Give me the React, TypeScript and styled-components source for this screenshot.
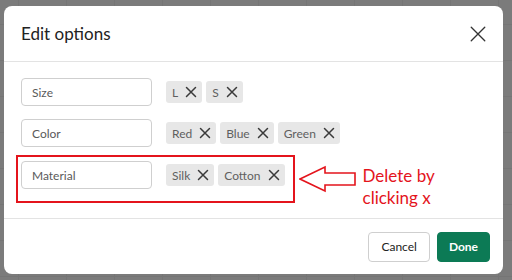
import styled, { createGlobalStyle } from "styled-components";

const GlobalStyle = createGlobalStyle`
   html, body {
      margin: 0;
      padding: 0;
   }
   body {
      font-family: Lato, "Noto Sans", "Liberation Sans", sans-serif;
      background: #7b7b7b;
   }
   * {
      box-sizing: border-box;
   }
`

const Backdrop = styled.div`
   width: 512px;
   height: 280px;
   overflow: hidden;
   background-color: #7b7b7b;
   background-image:
      linear-gradient(#757575 1px, transparent 1px),
      linear-gradient(90deg, #757575 1px, transparent 1px);
   background-size: 100% 36px, 48px 100%;
   background-position: 0 24px, 18px 0;
   padding: 6px 9px 6px 4px;
`

const Modal = styled.div`
   width: 499px;
   height: 268px;
   background: #ffffff;
   border-radius: 8px;
   display: flex;
   flex-direction: column;
`

const Header = styled.div`
   height: 56px;
   display: flex;
   align-items: center;
   justify-content: space-between;
   padding: 0 16px 0 17px;
   border-bottom: 1px solid #e3e3e3;
`

const Title = styled.h2`
   margin: 0;
   font-size: 17px;
   font-weight: 400;
   color: #222;
`

const IconButton = styled.button`
   background: transparent;
   border: 0;
   padding: 0;
   width: 18px;
   height: 18px;
   display: flex;
   align-items: center;
   justify-content: center;
   color: #333;
   cursor: pointer;
`

const Body = styled.div`
   flex: 1;
   display: flex;
   flex-direction: column;
   gap: 13px;
   padding: 16px 17px 0 17px;
   border-bottom: 1px solid #e3e3e3;
`

const Row = styled.div<{ highlighted?: boolean }>`
   position: relative;
   height: 28px;
   display: flex;
   align-items: center;
   margin-top: ${({ highlighted }) => (highlighted ? "1px" : "0")};

   ${({ highlighted }) => highlighted && `
      &::after {
         content: "";
         position: absolute;
         top: -6px;
         left: -5px;
         width: 275px;
         height: 44px;
         border: 2px solid #e4141c;
         pointer-events: none;
      }
   `}
`

const NameInput = styled.input`
   width: 131px;
   height: 28px;
   border: 1px solid #cfcfcf;
   border-radius: 4px;
   padding: 0 10px;
   font-family: inherit;
   font-size: 12px;
   color: #5a5a5a;
   outline: none;
   background: #fff;
`

const Chips = styled.div`
   display: flex;
   gap: 4px;
   margin-left: 14px;
`

const Chip = styled.span`
   height: 22px;
   display: inline-flex;
   align-items: center;
   gap: 7px;
   padding: 0 5px 0 6px;
   background: #e7e7e7;
   border-radius: 3px;
   font-size: 12px;
   color: #5f5f5f;
`

const ChipRemove = styled.button`
   background: transparent;
   border: 0;
   padding: 0;
   display: flex;
   color: #3a3a3a;
   cursor: pointer;
`

const Annotation = styled.div`
   display: flex;
   align-items: flex-start;
   align-self: flex-start;
   margin-left: 14px;
   margin-top: 4px;
   gap: 6px;
`

const Note = styled.div`
   color: #e4141c;
   font-size: 17px;
   line-height: 22px;
`

const Footer = styled.div`
   height: 55px;
   display: flex;
   align-items: center;
   justify-content: flex-end;
   gap: 7px;
   padding: 0 13px;
`

const Button = styled.button<{ primary?: boolean }>`
   height: 30px;
   padding: 0 ${({ primary }) => (primary ? "11px" : "12px")};
   border-radius: 4px;
   font-family: inherit;
   font-size: 12px;
   font-weight: ${({ primary }) => (primary ? 700 : 400)};
   color: ${({ primary }) => (primary ? "#fff" : "#222")};
   background: ${({ primary }) => (primary ? "#0c7a55" : "#fff")};
   border: 1px solid ${({ primary }) => (primary ? "#0c7a55" : "#cfcfcf")};
   cursor: pointer;
`

const CloseIcon = ({ size, width }: { size: number; width: number }) => (
   <svg width={size} height={size} viewBox="0 0 16 16" fill="none" stroke="currentColor" strokeWidth={width} strokeLinecap="round">
      <path d="M2 2 L14 14 M14 2 L2 14" />
   </svg>
)

const Arrow = () => (
   <svg width="58" height="28" viewBox="0 0 58 28">
      <path d="M1 14 L26 2 L26 8 L56 8 L56 20 L26 20 L26 26 Z" fill="#fff" stroke="#e4141c" strokeWidth="1.6" strokeLinejoin="miter" />
   </svg>
)

const options = [
   { name: "Size", values: ["L", "S"] },
   { name: "Color", values: ["Red", "Blue", "Green"] },
   { name: "Material", values: ["Silk", "Cotton"] },
]

export default function App() {
   return (
      <>
         <GlobalStyle />
         <Backdrop>
            <Modal>
               <Header>
                  <Title>Edit options</Title>
                  <IconButton aria-label="Close">
                     <CloseIcon size={18} width={1.2} />
                  </IconButton>
               </Header>
               <Body>
                  {options.map((opt, i) => {
                     const last = i === options.length - 1
                     return (
                        <Row key={opt.name} highlighted={last}>
                           <NameInput defaultValue={opt.name} />
                           <Chips>
                              {opt.values.map(v => (
                                 <Chip key={v}>
                                    {v}
                                    <ChipRemove aria-label={`Remove ${v}`}>
                                       <CloseIcon size={12} width={2} />
                                    </ChipRemove>
                                 </Chip>
                              ))}
                           </Chips>
                           {last && (
                              <Annotation>
                                 <Arrow />
                                 <Note>Delete by<br />clicking x</Note>
                              </Annotation>
                           )}
                        </Row>
                     )
                  })}
               </Body>
               <Footer>
                  <Button>Cancel</Button>
                  <Button primary>Done</Button>
               </Footer>
            </Modal>
         </Backdrop>
      </>
   )
}
